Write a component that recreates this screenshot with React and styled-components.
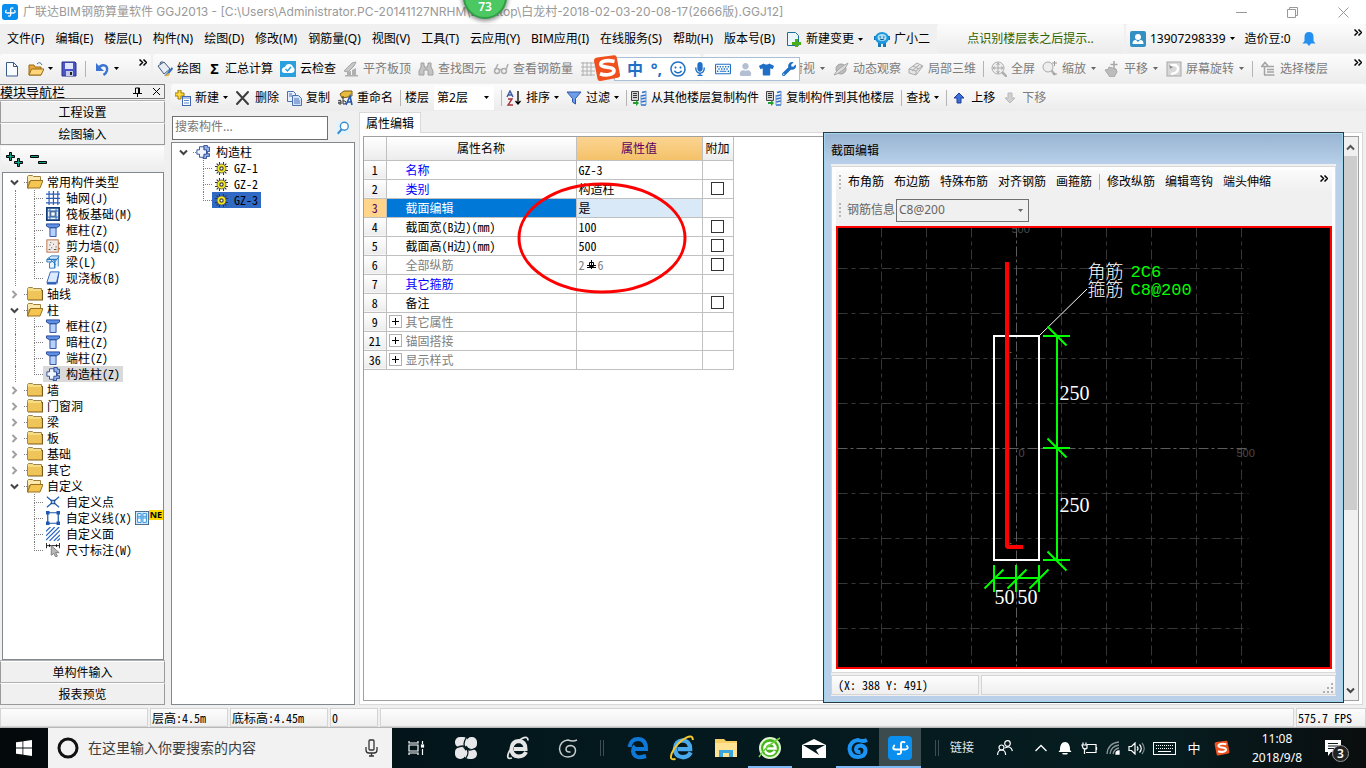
import React from "react";
import styled, { createGlobalStyle, css } from "styled-components";
import {
  FaMicrophone,
  FaTshirt,
  FaWrench,
  FaRegKeyboard,
  FaRegSmile,
  FaUser,
} from "react-icons/fa";

const UI = `"Noto Sans", "Noto Sans CJK SC", sans-serif`;
const SONG = `"Noto Sans Mono CJK SC", "Noto Sans CJK SC", monospace`;

const GlobalStyle = createGlobalStyle`
  * {
    box-sizing: border-box;
  }
  body {
    margin: 0;
    background: #f0f0f0;
    color: #000;
    font: 12px/16px ${UI};
  }
  button, input, select {
    margin: 0;
    padding: 0;
    border: 0;
    background: none;
    color: inherit;
    font: inherit;
  }
  svg {
    display: block;
    flex: none;
  }
`;

const Page = styled.div`
  position: relative;
  display: flex;
  flex-direction: column;
  min-height: 100vh;
  overflow: hidden;
  white-space: nowrap;
`;

/* ---------- title bar ---------- */

const TitleBar = styled.header`
  display: flex;
  align-items: center;
  gap: 5px;
  height: 24px;
  padding-left: 2px;
  background: #fff;
  color: #999;
`;

const WindowTitle = styled.h1`
  flex: 1;
  margin: 0;
  font: 400 12px/16px Inter, "Noto Sans CJK SC", sans-serif;
`;

const WindowButton = styled.button`
  display: grid;
  place-items: center;
  width: 46px;
  height: 22px;
  color: #999;
`;

const Score = styled.div`
  position: absolute;
  top: -25px;
  left: 463px;
  display: flex;
  align-items: flex-end;
  justify-content: center;
  width: 44px;
  height: 44px;
  padding-bottom: 3px;
  border: 2px solid #2f9e47;
  border-radius: 50%;
  background: #4cc863;
  color: #fff;
  font-weight: 600;
  line-height: 14px;
  box-shadow: 0 1px 4px 1px rgba(0, 0, 0, 0.45);
`;

/* ---------- menu and tool bars ---------- */

const BarRow = styled.div`
  display: flex;
  gap: 2px;
  height: 30px;
`;

const Bar = styled.div`
  display: flex;
  align-items: center;
  gap: ${(p) => p.$gap || 7}px;
  height: ${(p) => (p.$low ? 27 : 29)}px;
  padding: 0 ${(p) => p.$right || 4}px 0 ${(p) => p.$left || 4}px;
  border-radius: 3px;
  background: linear-gradient(#fcfcfc, #ececec);
  ${(p) => p.$grow && "flex: 1;"}
  ${(p) => p.$fixed && `width: ${p.$fixed}px; overflow: hidden;`}
`;

const MenuBar = styled.nav`
  display: flex;
  align-items: center;
  gap: 11px;
  width: 935px;
  padding-left: 7px;
`;

const ToolButton = styled.button`
  display: flex;
  flex: none;
  align-items: center;
  gap: 4px;
  color: ${(p) => (p.disabled ? "#7c7c7c" : "#000")};
`;

const Sigma = styled.b`
  width: 13px;
  font-size: 14px;
`;

const Notice = styled.a`
  flex: 1;
  color: #2d6200;
  text-align: center;
  text-decoration: none;
`;

const Separator = styled.span`
  flex: none;
  width: 1px;
  height: 16px;
  margin: 0 ${(p) => (p.$tight ? -3 : 0)}px 0 ${(p) => (p.$both ? -3 : 0)}px;
  background: #b4b4b4;
`;

const MoreButton = styled.button`
  align-self: flex-start;
  margin: 5px 0 0 auto;
`;

const More = () => (
  <MoreButton aria-label="更多">
    <svg width="8" height="7" fill="none" stroke="#000" strokeWidth="1.500">
      <path d="M.5.500l3 3-3 3M4.500.500l3 3-3 3" />
    </svg>
  </MoreButton>
);

const Arrow = styled.svg`
  margin: 0 ${(p) => (p.$gray ? 1 : 0)}px;
`;

const Caret = ({ gray }) => (
  <Arrow $gray={gray} width="5" height="3" aria-hidden="true">
    <path d="M0 0h5L2.500 3z" fill={gray ? "#666" : "#000"} />
  </Arrow>
);

const FloorPicker = styled.label`
  display: flex;
  align-items: center;
  gap: 5px;
`;

const SelectBox = styled.span`
  display: flex;
  align-items: center;
  width: ${(p) => p.$width}px;
  height: ${(p) => (p.$boxed ? 23 : 24)}px;
  padding: 0 4px 0 2px;
  border: 1px solid ${(p) => (p.$boxed ? "#707070" : "#fff")};
  background: ${(p) => (p.$boxed ? "#f0f0f0" : "#fff")};
  select {
    flex: 1;
    min-width: 0;
    appearance: none;
    outline: 0;
  }
`;

/* ---------- floating input method bar ---------- */

const ImeBar = styled.div`
  position: absolute;
  top: 57px;
  left: 614px;
  display: flex;
  align-items: center;
  justify-content: space-between;
  width: 186px;
  height: 24px;
  padding: 0 3px 0 12px;
  border: 1px solid #a9bfd6;
  background: #fff;
  color: #1e6fc5;
  font-size: 16px;
  font-weight: 700;
`;

const ImeLogo = styled.div`
  position: absolute;
  top: -4px;
  left: -22px;
`;

/* ---------- work area ---------- */

const Body = styled.div`
  display: flex;
  flex: 1;
  gap: 6px;
  min-height: 0;
`;

const Dock = styled.aside`
  display: flex;
  flex-direction: column;
  width: 165px;
  padding-bottom: 3px;
`;

const DockHeader = styled.header`
  display: flex;
  align-items: center;
  height: 15px;
  margin-bottom: 2px;
  padding-right: 3px;
  border: 1px solid #7a7a7a;
  border-left: 0;
  font: 13px/13px ${SONG};
  h2 {
    flex: 1;
    margin: 0;
    font-size: 13px;
    font-weight: 400;
  }
  button + button {
    margin-left: 10px;
  }
`;

const SectionButton = styled.button`
  height: 22px;
  border: 1px solid #9a9a9a;
  border-top-color: #fff;
  box-shadow: 0 -1px #b0b0b0;
  font: 12px/18px ${SONG};
`;

const TreeTools = styled.div`
  display: flex;
  align-items: center;
  gap: 7px;
  height: 26px;
  margin: 1px 1px 0;
  padding-left: 5px;
  background: linear-gradient(#fdfdfd, #ececec);
`;

const Tree = styled.ul`
  flex: 1;
  margin: ${(p) => p.$margin || "0"};
  padding: 1px 0;
  border: 1px solid #828790;
  background: #fff;
  font: 12px/16px ${SONG};
  list-style: none;
`;

const Row = styled.li`
  display: flex;
  align-items: center;
  height: 16px;
  padding-left: ${(p) => p.$indent || 0}px;
`;

const Toggle = styled.button`
  display: grid;
  place-items: center;
  width: 20px;
  height: 16px;
`;

const Stub = styled.span`
  width: 3px;
  border-top: 1px dotted #808080;
`;

const GroupName = styled.span`
  margin-left: ${(p) => p.$gap || 4}px;
`;

const Outer = styled.span`
  align-self: stretch;
  width: ${(p) => p.$width}px;
  ${(p) => p.$line && "border-left: 1px dotted #808080;"}
`;

const Branch = styled.span`
  display: flex;
  flex-direction: column;
  align-self: stretch;
  width: 9px;
  &::before {
    content: "";
    height: 8px;
    border: 0 dotted #808080;
    border-width: 0 0 1px 1px;
  }
  &::after {
    content: "";
    flex: 1;
    border-left: ${(p) => (p.$last ? 0 : 1)}px dotted #808080;
  }
`;

const Node = styled.button`
  display: flex;
  flex: none;
  align-items: center;
  gap: 6px;
  height: 16px;
  padding: 0 3px;
  background: ${(p) => p.$fill || "none"};
`;

const NewTag = styled.span`
  align-self: flex-start;
  padding: 0 1px;
  background: #ffd800;
  font: 700 9px/10px ${UI};
`;

const Work = styled.main`
  display: flex;
  flex: 1;
  flex-direction: column;
  min-width: 0;
`;

const Panels = styled.div`
  position: relative;
  display: flex;
  flex: 1;
  gap: 4px;
  margin-top: 1px;
`;

const Components = styled.section`
  display: flex;
  flex-direction: column;
  width: 184px;
  padding: 4px 0 3px;
`;

const SearchRow = styled.div`
  display: flex;
  gap: 3px;
  margin-bottom: 2px;
  padding-left: 1px;
  input {
    flex: 1;
    min-width: 0;
    height: 24px;
    padding: 0 2px 3px;
    border: 1px solid #707070;
    background: #fff;
  }
  input::placeholder {
    color: #777;
  }
  button {
    display: grid;
    place-items: center;
    width: 24px;
  }
`;

const Properties = styled.section`
  display: flex;
  flex: 1;
  flex-direction: column;
  margin-right: 3px;
`;

const Tab = styled.button`
  align-self: flex-start;
  z-index: 1;
  height: 21px;
  margin-bottom: -1px;
  padding: 0 6px;
  border: 1px solid #d9d9d9;
  border-bottom: 0;
  background: #fff;
  font: 12px/16px ${SONG};
`;

const TabPage = styled.div`
  display: flex;
  flex: 1;
  margin-bottom: 3px;
  padding: 3px;
  border: 1px solid #d9d9d9;
  background: #fff;
`;

const Sheet = styled.div`
  display: flex;
  flex: 1;
  align-items: stretch;
  justify-content: space-between;
  border: 1px solid #a0a0a0;
`;

const TableWrap = styled.div`
  position: relative;
`;

const Table = styled.table`
  border-collapse: collapse;
  table-layout: fixed;
  width: 369px;
  font: 12px/16px ${SONG};
  th,
  td {
    height: 19px;
    padding: 0 2px;
    border: 1px solid #c0c0c0;
    font-weight: 400;
    text-align: left;
  }
  th {
    background: linear-gradient(#fff, #ececec);
    text-align: center;
  }
  thead th {
    height: 23px;
    border-top: 0;
  }
  th:first-child {
    border-left: 0;
  }
`;

const ValueHead = styled.th`
  && {
    background: linear-gradient(#fbd491, #f4c169);
    color: #5b0060;
  }
`;

const RowHead = styled.th`
  && {
    ${(p) => p.$on && "background: #ffd58c; color: #5b0060;"}
  }
`;

const NameCell = styled.td`
  && {
    padding-left: ${(p) => (p.$group ? 2 : 19)}px;
    background: ${(p) => (p.$on ? "#0078d7" : "#fff")};
    color: ${(p) => p.$color};
  }
`;

const NameInner = styled.span`
  display: flex;
  align-items: center;
  gap: 4px;
`;

const Expand = styled.button`
  display: grid;
  place-items: center;
  width: 13px;
  height: 13px;
  border: 1px solid #b0b0b0;
  color: #000;
`;

const ValueCell = styled.td`
  && {
    ${(p) => p.$on && "background: #d9e9f8;"}
  }
`;

const BarCount = styled.span`
  display: flex;
  align-items: center;
  gap: 2px;
  color: #808080;
`;

const Box = styled.input`
  appearance: none;
  display: block;
  width: 13px;
  height: 13px;
  margin: 0 auto;
  border: 1px solid #333;
  background: #fff;
`;

const Circled = styled.svg`
  position: absolute;
  top: 44px;
  left: 153px;
`;

const ScrollBar = styled.div`
  display: flex;
  flex-direction: column;
  align-items: center;
  justify-content: space-between;
  width: 16px;
  padding: 6px 0 5px;
  background: #f0f0f0;
  &::after {
    content: "";
    order: 1;
    width: 14px;
    height: 354px;
    margin: 0 0 auto;
    background: #cdcdcd;
  }
  button {
    order: 0;
    margin-bottom: 4px;
  }
  button + button {
    order: 2;
    margin: 0;
  }
`;

/* ---------- section editor window ---------- */

const Dialog = styled.section`
  position: absolute;
  top: 20px;
  right: 22px;
  bottom: 5px;
  z-index: 2;
  display: flex;
  flex-direction: column;
  width: 521px;
  padding: 0 7px 6px;
  border: 1px solid #2a3a42;
  background: linear-gradient(#98b4d2, #b9d1ea 32px, #bacfe8 33px);
  box-shadow: inset 0 0 0 1px #9fd6ee;
`;

const DialogTitle = styled.h2`
  margin: 0;
  padding: 10px 0 5px;
  font-size: 12px;
  font-weight: 400;
  line-height: 16px;
`;

const DialogBody = styled.div`
  display: flex;
  flex: 1;
  flex-direction: column;
  gap: 2px;
  background: #f0f0f0;
`;

const EditorFrame = styled.div`
  display: flex;
  flex: 1;
  flex-direction: column;
  margin-top: 2px;
  padding: 3px 3px 3px 4px;
  border: 1px solid #d9d9d9;
  background: #fff;
`;

const EditorBar = styled.div`
  display: flex;
  align-items: center;
  gap: ${(p) => p.$gap}px;
  height: ${(p) => p.$height}px;
  padding: 0 4px 0 3px;
  background: ${(p) => (p.$plain ? "#f0f0f0" : "linear-gradient(#fbfbfb, #efefef)")};
  color: ${(p) => (p.$plain ? "#666" : "#000")};
  label {
    display: flex;
    align-items: center;
    gap: 1px;
  }
`;

const Grip = styled.span`
  width: 2px;
  height: 14px;
  margin-right: -3px;
  background: repeating-linear-gradient(#b8b8b8 0 2px, transparent 2px 4px);
`;

const Canvas = styled.div`
  display: flex;
  flex: 1;
  border: 2px solid #f00;
  background: #000;
  svg {
    flex: 1;
    width: 0;
    height: auto;
  }
`;

const EditorStatus = styled.div`
  display: flex;
  gap: 2px;
  height: 20px;
  margin-bottom: 1px;
  font: 12px/18px ${SONG};
`;

const StatusCell = styled.div`
  display: flex;
  align-items: center;
  padding: 0 ${(p) => p.$pad || 1}px;
  border: 1px solid #d4d4d4;
  background: linear-gradient(#fdfdfd, #efefef);
  ${(p) => (p.$width ? `width: ${p.$width}px;` : "flex: 1;")}
  ${(p) => p.$end && "align-items: flex-end; justify-content: flex-end;"}
`;

const StatusBar = styled.footer`
  display: flex;
  gap: 2px;
  height: 20px;
  border-bottom: 1px solid #b8b8b8;
  font: 12px/16px ${SONG};
`;

/* ---------- task bar ---------- */

const TaskBar = styled.footer`
  display: flex;
  align-items: stretch;
  height: 40px;
  background: linear-gradient(90deg, #04090b, #03171c 35%, #061d20 85%, #0a0d0e);
  color: #fff;
`;

const TaskButton = styled.button`
  display: grid;
  place-items: center;
  width: ${(p) => p.$width || 44}px;
  ${(p) => p.$on && "background: #3c4b4e;"}
  ${(p) =>
    p.$open &&
    css`
      border-top: 2px solid transparent;
      border-bottom: 2px solid #7db9f5;
    `}
`;

const Cortana = styled.label`
  display: flex;
  align-items: center;
  gap: 8px;
  width: 344px;
  padding: 0 14px 0 8px;
  background: #f2f2f2;
  color: #333;
  input {
    flex: 1;
    font-size: 14px;
  }
  input::placeholder {
    color: #3c3c3c;
  }
`;

const Divider = styled.span`
  align-self: center;
  width: 4px;
  height: 16px;
  margin: 0 ${(p) => p.$right}px 0 ${(p) => p.$left}px;
  border: 1px solid #3f4c50;
  border-width: 0 1px;
`;

const Links = styled.button`
  color: #e4e6e7;
`;

const Tray = styled.div`
  display: flex;
  flex: 1;
  align-items: center;
  justify-content: flex-end;
`;

const TrayIcon = styled.button`
  display: grid;
  place-items: center;
  width: ${(p) => p.$width}px;
  height: 40px;
  font-size: 13px;
`;

const Clock = styled.time`
  width: 80px;
  font-size: 12px;
  line-height: 19px;
  text-align: center;
`;

const Notices = styled.button`
  position: relative;
  width: 42px;
  height: 24px;
  margin-right: 7px;
  padding-left: 8px;
`;

const Count = styled.span`
  position: absolute;
  top: 9px;
  left: 15px;
  width: 17px;
  height: 17px;
  border: 1px solid #999;
  border-radius: 50%;
  background: #222;
  font: 600 12px/15px ${UI};
  text-align: center;
`;

/* ---------- icons ---------- */

const AppLogo = ({ size = 16 }) => (
  <svg width={size} height={size} viewBox="0 0 24 24">
    <rect width="24" height="24" rx="4" fill="#0a8fef" />
    <path
      d="M16.500 6.200q-3.500-1.200-3.500 2V16q0 2.600-3.200 2M6.200 9.500Q3.500 13.500 8 13.500h9q4.200-.5 2-3.500"
      fill="none"
      stroke="#fff"
      strokeWidth="1.900"
      strokeLinecap="round"
    />
  </svg>
);

const SogouLogo = ({ size = 28 }) => (
  <svg width={size} height={size} viewBox="0 0 28 28">
    <path d="M4 3.500 21 1.200q2.300-.2 2.700 2L27 20.500q.4 2.700-2.200 3.200L7.500 27Q5 27.400 4.500 25L1 7Q.7 4 4 3.500z" fill="#f0501e" />
    <path
      d="M21.500 7.500C14 5.500 7.500 7 7.800 10.500c.4 4.200 13.200 1.300 13.200 6.200 0 4-8 5.200-14 3"
      fill="none"
      stroke="#fff"
      strokeWidth="3.600"
    />
  </svg>
);

const icons = {
  file: (
    <path d="M2.500 1.500h7l4 4v9.500h-11z M9.500 1.500v4h4" fill="#f8fbff" stroke="#3a5c8c" />
  ),
  open: (
    <>
      <path d="M1 4h5l1 2h6v8H1z" fill="#e8a93a" stroke="#9a6a16" />
      <path d="M3.500 8H16l-3 6H1z" fill="#ffd77a" stroke="#9a6a16" />
      <path d="M9 3q3-3 5 1" fill="none" stroke="#4a6c9a" />
    </>
  ),
  save: (
    <>
      <path d="M1 1h13l1 1v13H1z" fill="#4b55c8" stroke="#2b3488" />
      <path d="M4 2h8v6H4z" fill="#dfe6ff" />
      <path d="M5 10h7v5H5z" fill="#c3cbe8" />
      <path d="M9 11h2v3H9z" fill="#222" />
    </>
  ),
  undo: (
    <>
      <path d="M4 7.500C8 2 14 4 13 9.500q-.6 2.500-3.500 4.500" fill="none" stroke="#3c74d4" strokeWidth="2.400" />
      <path d="M2 2v8h8z" fill="#3c74d4" />
    </>
  ),
  bucket: (
    <>
      <path d="M1 5l6-4 6 7-6 5z" fill="#e6edf5" stroke="#3f5878" />
      <path d="M3 3q0-3 3-2" fill="none" stroke="#3f5878" />
      <path d="M15 6l-5 6-3 3 4-1 5-6z" fill="#2f6bc0" />
      <path d="M8 15q4 1 5-2l-2-1z" fill="#e8b53a" />
    </>
  ),
  cloud: (
    <>
      <rect width="16" height="16" fill="#2aa0dc" />
      <path d="M4 12q-3-1-2-4 1-2 3-2 1-3 4-3 3 0 4 3 2 1 1.500 3.500T11 12z" fill="#fff" />
      <path d="M5.500 8l2 2 3.500-4" fill="none" stroke="#2aa0dc" strokeWidth="1.500" />
    </>
  ),
  slab: (
    <>
      <path d="M1 10l8-8 4-1-2 4-6 6z" fill="#c8c8c8" stroke="#a4a4a4" />
      <path d="M4 15v-4l4-1v5zM9 15V9l4-2v8zM2 14h13v1.500H2z" fill="#b0b0b0" />
    </>
  ),
  find: (
    <path
      d="M3 2h3v3h1v2h2V5h1V2h3v4l2 4v4h-5V9H6v5H1v-4l2-4z"
      fill="#c4c4c4"
      stroke="#a0a0a0"
    />
  ),
  glasses: (
    <g fill="none" stroke="#adadad" strokeWidth="1.500">
      <circle cx="4" cy="10" r="2.500" />
      <circle cx="11" cy="10" r="2.500" />
      <path d="M6 9q1.500-1 3 0M2 9l3-6M13 9l2-6" />
    </g>
  ),
  grid: (
    <path d="M1 2h14M1 6h14M1 10h14M1 14h14M3 1v14M7 1v14M11 1v14" stroke="#b0b0b0" fill="none" />
  ),
  planet: (
    <>
      <circle cx="8" cy="8" r="5" fill="#bdbdbd" stroke="#a0a0a0" />
      <path d="M1 14Q4 8 15 2q-2 6-11 11z" fill="#dedede" stroke="#a8a8a8" />
    </>
  ),
  cube: (
    <path
      d="M1 8l8-6 6 3-7 9-7-2zM5 5l6 3M4 10l7-6M1 8l7 2v4M8 10l6-5"
      fill="#e6e6e6"
      stroke="#aaa"
    />
  ),
  full: (
    <>
      <circle cx="7" cy="7" r="6" fill="#eee" stroke="#aaa" />
      <path d="M7 2v10M2 7h10M5.500 4L7 2l1.500 2M5.500 10L7 12l1.500-2M4 5.500L2 7l2 1.500M10 5.500L12 7l-2 1.500" fill="none" stroke="#aaa" />
      <path d="M11 11l5 5" stroke="#b0b0b0" strokeWidth="2.500" />
    </>
  ),
  zoom: (
    <>
      <circle cx="6" cy="6" r="5" fill="#eee" stroke="#aaa" />
      <path d="M9.500 9.500L13 14" stroke="#b0b0b0" strokeWidth="2.500" />
      <path d="M10 2h5M12.500 0v5M11 13h4" stroke="#999" />
    </>
  ),
  hand: (
    <>
      <path d="M1 9q2-1 3 0l1-3 7 2 1 3-3 5H6z" fill="#bcbcbc" stroke="#a6a6a6" />
      <path d="M10 0v7M6.500 3.500h7" stroke="#a6a6a6" strokeWidth="1.500" />
    </>
  ),
  turn: (
    <>
      <rect x="1" y="1" width="14" height="14" fill="#d8d8d8" stroke="#a8a8a8" />
      <path d="M5 13q7-1 7-5T8 4 4 6.500" fill="none" stroke="#fff" strokeWidth="2.400" />
      <path d="M3 4l1 4 3-2z" fill="#8c8c8c" />
    </>
  ),
  floors: (
    <path d="M1 5.500h13M2 5l3-3.500L8 5M4.500 6v8M4 14h10.500M7 8.500h7M7 11h7" stroke="#a4a4a4" strokeWidth="1.500" />
  ),
  add: (
    <>
      <path d="M3 0h3v3h3v3H6v3H3V6H0V3h3z" fill="#ffd83a" stroke="#9c7a10" />
      <rect x="7.500" y="6.500" width="8" height="9" fill="#fff" stroke="#3f68b0" />
      <path d="M8 8h7M9 10.500h5M9 13h5" stroke="#5b86cf" />
    </>
  ),
  remove: (
    <path d="M2 2l11 12M13 2L2 14" stroke="#3c3c3c" strokeWidth="2" strokeLinecap="round" />
  ),
  copy: (
    <>
      <path d="M1.500 1.500h6l2 2v8h-8z" fill="#e8f0ff" stroke="#4a70b0" />
      <path d="M6.500 5.500h6l3 3v7h-9z" fill="#d3e2ff" stroke="#4a70b0" />
      <path d="M8 9h5M8 11h6M8 13h6M3 4h3M3 6h3" stroke="#4a70b0" />
    </>
  ),
  rename: (
    <>
      <path d="M3 4l4-3h8v5l-4 1-6 1z" fill="#e8bb3c" stroke="#7a5a10" />
      <path d="M1 11q3-2 3 0v3H2q-2-2 2-2M6 6v8h2q2-2 0-3H6" fill="none" stroke="#333" />
      <path d="M9 15l4-9 2 9M10 12h5" fill="none" stroke="#2458b0" strokeWidth="1.600" />
    </>
  ),
  sort: (
    <>
      <path d="M1 7l3-6 3 6M2 5h4" fill="none" stroke="#3c58a0" strokeWidth="1.400" />
      <path d="M2 9h4l-4 6h5" fill="none" stroke="#a8323c" strokeWidth="1.400" />
      <path d="M12 1v13M9.500 11l2.500 3 2.500-3" fill="none" stroke="#000" strokeWidth="1.300" />
    </>
  ),
  funnel: <path d="M1 2h14L9.500 8.500V14l-3-2V8.500z" fill="#6f9fe8" stroke="#2b56a8" />,
  copyFloor: (
    <>
      <path d="M.5 1.500h7v9h-7z" fill="#d4d4d4" stroke="#444" />
      <path d="M2 3.500h4M2 5.500h4M2 7.500h4" stroke="#333" />
      <path d="M11 2.500l4-1M10 6l5-1M10 9l5-1M10 12l5-1M10 15h5" stroke="#2f6fc8" strokeWidth="1.600" />
      <path d="M10 5v10M15 1v14" stroke="#6c9cdc" />
      <path d="M2 12h3v-2l3 3-3 3v-2H2z" fill="#20a030" />
    </>
  ),
  up: <path d="M8 3l5 5h-3v5H6V8H3z" fill="#3c6fdc" stroke="#1c3f9c" />,
  down: <path d="M8 13L3 8h3V3h4v5h3z" fill="#d0d0d0" stroke="#b8b8b8" />,
  change: (
    <>
      <path d="M1.500 1.500h8l3 3v10h-11z" fill="#eaf6fc" stroke="#1d6f95" />
      <path d="M9 8h3v3h3v3h-3v3H9v-3H6v-3h3z" fill="#4cae16" />
    </>
  ),
  mascot: (
    <>
      <path d="M0 5h2v4H0zM14 5h2v4h-2zM4 11h3v5H4zM9 11h3v5H9z" fill="#1578b8" />
      <ellipse cx="8" cy="7" rx="7" ry="6" fill="#1c98dc" />
      <ellipse cx="8" cy="6.500" rx="4.500" ry="3.500" fill="#a8defa" />
      <path d="M5.500 6h1.500M9 6h1.500M6 8q2 1.500 4 0" fill="none" stroke="#075080" />
    </>
  ),
  account: (
    <>
      <rect width="16" height="16" rx="2" fill="#3290c4" />
      <circle cx="8" cy="6" r="3" fill="#fff" />
      <path d="M2.500 13q0-4 3-4h5q3 0 3 4z" fill="#fff" />
      <path d="M6 9l2 2 2-2" fill="#3290c4" />
    </>
  ),
  bell: (
    <path d="M8 1q4.500 0 4.500 5v4l2 2.500H10l-2 2.500-2-2.500H1.500L3.500 10V6Q3.500 1 8 1z" fill="#2490f0" />
  ),
  magnifier: (
    <>
      <rect width="16" height="16" fill="#e6f2fa" />
      <circle cx="9.500" cy="6" r="4.500" fill="#fff" stroke="#3a8fd0" strokeWidth="1.600" />
      <path d="M6.500 9.500l-4.500 5" stroke="#3a8fd0" strokeWidth="2.400" />
    </>
  ),
  folder: (
    <>
      <path d="M.5 3.500v-1l1-1h4l1 1h8v11H.5z" fill="#f7dc86" stroke="#9c8650" />
      <path d="M1 5h14v9H1z" fill="#efc559" />
      <path d="M1 14h14.500V4" fill="none" stroke="#7d5a18" strokeWidth="1.200" />
    </>
  ),
  folderOpen: (
    <>
      <path d="M.5 2.500l1-1h4l1 1h7v5H2v6.500H.5z" fill="#fbe9ac" stroke="#a08038" />
      <path d="M3.500 6.500H16L13 14H.5z" fill="#f4c550" stroke="#9a7020" />
    </>
  ),
  axis: (
    <path d="M0 3.500h16M0 8.500h16M0 13.500h16M3.500 0v16M8.500 0v16M13.500 0v16" stroke="#2c5cb8" strokeWidth="1.400" />
  ),
  raft: (
    <>
      <rect x="1" y="1" width="14" height="14" fill="#eaf2ff" stroke="#123c78" strokeWidth="2" />
      <path d="M4.500 2v12M11.500 2v12M2 4.500h12M2 11.500h12" stroke="#2060b0" />
      <rect x="5.500" y="5.500" width="5" height="5" fill="#fff" stroke="#123c78" />
    </>
  ),
  column: (
    <>
      <path d="M.5 1h15v2.500l-3.500 2H4l-3.500-2z" fill="#5d8fe6" stroke="#1c3f90" />
      <path d="M4.500 5.500h7v10h-7z" fill="#b6d0ff" stroke="#1c3f90" />
    </>
  ),
  wall: (
    <>
      <rect x="1" y="1" width="13" height="14" fill="#f2ece8" stroke="#b56434" />
      <path d="M3 12h2M6 10h1M9 12h3M4 7h1M8 6h1M11 9h1M5 4h1" stroke="#555" strokeWidth="1.400" />
      <path d="M14 5h2M14 11h2" stroke="#c87030" strokeWidth="2" />
    </>
  ),
  beam: (
    <>
      <path d="M1 5l5-4h9l-2 4zM1 5h12v3H1z" fill="#cfe6fb" stroke="#2472b8" />
      <path d="M4 15V9l6-3v9zM10 15V8l4-5v10" fill="#e8f4ff" stroke="#2472b8" />
      <path d="M3 3l8 8" stroke="#2472b8" />
    </>
  ),
  plate: (
    <>
      <path d="M5 1h10l-3 12H1z" fill="#dceaff" stroke="#1c58b0" />
      <path d="M1 13h11v2.500H1zM12 13l3-12v3l-2 11" fill="#2860b8" />
    </>
  ),
  structure: (
    <>
      <path d="M9 .5h4v2h2.500v5H13V10h2.500v3H12v2.500H8z" fill="#8fb0ea" stroke="#24408c" />
      <path d="M4 2h5v3.500h3v5H9V14H4v-3.500H1v-5h3z" fill="#f2f7ff" stroke="#24408c" />
    </>
  ),
  cross: (
    <>
      <path d="M1 2l14 12M15 2L1 14" stroke="#2060b0" strokeWidth="1.400" />
      <rect x="6" y="6" width="4" height="4" fill="#9cc4ff" stroke="#123c78" />
    </>
  ),
  polyline: (
    <>
      <path d="M2 2h12v12H2z" fill="none" stroke="#1c58b0" strokeWidth="1.400" />
      <path d="M0 0h4v4H0zM12 0h4v4h-4zM0 12h4v4H0zM12 12h4v4h-4z" fill="#1c58b0" />
    </>
  ),
  hatch: (
    <path d="M0 5l5-5M0 10L10 0M0 15L15 0M4 16L16 4M9 16l7-7M13 16l3-3" stroke="#2a68c4" strokeWidth="1.400" />
  ),
  measure: (
    <>
      <path d="M.5 0v6M15.500 0v6M1 3h14M4 1.500v3M12 1.500v3" stroke="#000" />
      <path d="M6 3v11l3-2 2 4 2-1-2-4h4z" fill="#b8b8b8" stroke="#777" />
    </>
  ),
  book: (
    <>
      <rect x=".5" y=".5" width="15" height="15" fill="#cfe9ff" stroke="#3a5c7c" />
      <path d="M3 3h4v10H3zM9 3h4v10H9zM3 6h4M9 6h4M3 8h4M9 8h4" fill="#fff" stroke="#1f86d8" />
    </>
  ),
  part: (
    <>
      <path d="M5.500 0v16M10.500 0v16M0 5.500h16M0 10.500h16M2 2l12 12M14 2L2 14" stroke="#333" strokeWidth="1.300" />
      <circle cx="8" cy="8" r="5.500" fill="#f4e81c" stroke="#555" />
      <circle cx="8" cy="8" r="2" fill="#fff" stroke="#444" strokeWidth="1.500" />
    </>
  ),
};

const Icon = ({ name, size = 16 }) => (
  <svg width={size} height={size} viewBox="0 0 16 16" fill="none" aria-hidden="true">
    {icons[name]}
  </svg>
);

const Chevron = ({ open, up }) => (
  <svg width="9" height="9" viewBox="0 0 9 9" fill="none" aria-hidden="true">
    {open && <path d="M1 2.500l3.500 3.500L8 2.500" stroke="#444" strokeWidth="2" />}
    {up && <path d="M1 6.500L4.500 3 8 6.500" stroke="#555" strokeWidth="2" />}
    {!open && !up && <path d="M2.500 1L6 4.500 2.500 8" stroke="#a0a0a0" strokeWidth="2" />}
  </svg>
);

/* ---------- data ---------- */

const menus = [
  "文件(F)", "编辑(E)", "楼层(L)", "构件(N)", "绘图(D)", "修改(M)", "钢筋量(Q)",
  "视图(V)", "工具(T)", "云应用(Y)", "BIM应用(I)", "在线服务(S)", "帮助(H)", "版本号(B)",
];

const groups = [
  {
    name: "常用构件类型",
    line: true,
    items: [
      ["axis", "轴网(J)"],
      ["raft", "筏板基础(M)"],
      ["column", "框柱(Z)"],
      ["wall", "剪力墙(Q)"],
      ["beam", "梁(L)"],
      ["plate", "现浇板(B)"],
    ],
  },
  { name: "轴线" },
  {
    name: "柱",
    line: true,
    items: [
      ["column", "框柱(Z)"],
      ["column", "暗柱(Z)"],
      ["column", "端柱(Z)"],
      ["structure", "构造柱(Z)"],
    ],
  },
  { name: "墙" },
  { name: "门窗洞" },
  { name: "梁" },
  { name: "板" },
  { name: "基础" },
  { name: "其它" },
  {
    name: "自定义",
    items: [
      ["cross", "自定义点"],
      ["polyline", "自定义线(X)"],
      ["hatch", "自定义面"],
      ["measure", "尺寸标注(W)"],
    ],
  },
];

// 三级钢符号
const rebar = (
  <BarCount>
    2
    <svg width="9" height="10" fill="none" stroke="#000">
      <path d="M2.500 2.500h4v4h-4zM4.500 0v9M0 7.500h9M0 5.500h9" />
    </svg>
    6
  </BarCount>
);

const properties = [
  { no: 1, name: "名称", color: "#00f", value: "GZ-3" },
  { no: 2, name: "类别", color: "#00f", value: "构造柱", box: true },
  { no: 3, name: "截面编辑", color: "#fff", value: "是", on: true },
  { no: 4, name: "截面宽(B边)(mm)", value: "100", box: true },
  { no: 5, name: "截面高(H边)(mm)", value: "500", box: true },
  { no: 6, name: "全部纵筋", color: "#808080", value: rebar, box: true },
  { no: 7, name: "其它箍筋", color: "#00f", value: "" },
  { no: 8, name: "备注", value: "", box: true },
  { no: 9, name: "其它属性", color: "#808080", value: "", group: true },
  { no: 21, name: "锚固搭接", color: "#808080", value: "", group: true },
  { no: 36, name: "显示样式", color: "#808080", value: "", group: true },
];

/* ---------- parts ---------- */

const Tool = ({ icon, label, children, caret, disabled }) => (
  <ToolButton disabled={disabled} aria-label={label}>
    {icon && <Icon name={icon} />}
    {children}
    {caret && <Caret gray={disabled} />}
  </ToolButton>
);

const ModuleDock = () => (
  <Dock>
    <DockHeader>
      <h2>模块导航栏</h2>
      <button aria-label="固定">
        <svg width="9" height="10" fill="none" stroke="#000">
          <path d="M2.500 6V1h4v5M0 6.500h9M4.500 7v3M5.500 1v5" />
        </svg>
      </button>
      <button aria-label="关闭">
        <svg width="9" height="9" fill="none" stroke="#000">
          <path d="M1 1l7 7M8 1L1 8" />
        </svg>
      </button>
    </DockHeader>
    <SectionButton>工程设置</SectionButton>
    <SectionButton>绘图输入</SectionButton>
    <TreeTools>
      <button aria-label="全部展开">
        <svg width="17" height="15" fill="#0fa08c" stroke="#000">
          <path d="M3.500.5h2v3h3v2h-3v3h-2v-3h-3v-2h3z" />
          <path d="M11.500 6.500h2v3h3v2h-3v3h-2v-3h-3v-2h3z" />
        </svg>
      </button>
      <button aria-label="全部折叠">
        <svg width="17" height="11" fill="#0fa08c" stroke="#000">
          <path d="M.5 1.500h8v2h-8zM8.500 7.500h8v2h-8z" />
        </svg>
      </button>
    </TreeTools>
    <Tree $margin="0 1px 1px 2px">
      {groups.map((g) => (
        <React.Fragment key={g.name}>
          <Row $indent={1}>
            <Toggle aria-label={g.name}>
              <Chevron open={Boolean(g.items)} />
            </Toggle>
            <Stub />
            <Icon name={g.items ? "folderOpen" : "folder"} />
            <GroupName>{g.name}</GroupName>
          </Row>
          {(g.items || []).map(([icon, label], i) => (
            <Row key={label} $indent={12}>
              <Outer $width={19} $line={g.line} />
              <Branch $last={i === g.items.length - 1} />
              <Node $fill={label === "构造柱(Z)" && "#d9d9d9"}>
                <Icon name={icon} size={14} />
                {label}
              </Node>
              {icon === "polyline" && (
                <>
                  <Icon name="book" size={14} />
                  <NewTag>NE</NewTag>
                </>
              )}
            </Row>
          ))}
        </React.Fragment>
      ))}
    </Tree>
    <SectionButton>单构件输入</SectionButton>
    <SectionButton>报表预览</SectionButton>
  </Dock>
);

const ComponentList = () => (
  <Components>
    <SearchRow>
      <input type="text" aria-label="搜索构件" placeholder="搜索构件..." />
      <button aria-label="搜索">
        <Icon name="magnifier" size={14} />
      </button>
    </SearchRow>
    <Tree>
      <Row $indent={1}>
        <Toggle aria-label="构造柱">
          <Chevron open />
        </Toggle>
        <Stub />
        <Icon name="structure" size={14} />
        <GroupName $gap={6}>构造柱</GroupName>
      </Row>
      {["GZ-1", "GZ-2", "GZ-3"].map((name, i) => (
        <Row key={name} $indent={12}>
          <Outer $width={19} />
          <Branch $last={i === 2} />
          <Node $fill={i === 2 && "#316ac5"}>
            <Icon name="part" size={13} />
            {name}
          </Node>
        </Row>
      ))}
    </Tree>
  </Components>
);

const PropertyTable = () => (
  <TableWrap>
    <Table>
      <colgroup>
        <col width="22" />
        <col width="190" />
        <col width="126" />
        <col width="31" />
      </colgroup>
      <thead>
        <tr>
          <th />
          <th>属性名称</th>
          <ValueHead>属性值</ValueHead>
          <th>附加</th>
        </tr>
      </thead>
      <tbody>
        {properties.map((p) => (
          <tr key={p.no}>
            <RowHead $on={p.on}>{p.no}</RowHead>
            <NameCell $group={p.group} $on={p.on} $color={p.color || "#000"}>
              <NameInner>
                {p.group && (
                  <Expand aria-label={`展开${p.name}`}>
                    <svg width="7" height="7" stroke="#000">
                      <path d="M0 3.500h7M3.500 0v7" />
                    </svg>
                  </Expand>
                )}
                {p.name}
              </NameInner>
            </NameCell>
            <ValueCell $on={p.on}>{p.value}</ValueCell>
            <td>{p.box && <Box type="checkbox" aria-label={`附加${p.name}`} />}</td>
          </tr>
        ))}
      </tbody>
    </Table>
    <Circled width="170" height="114" fill="none">
      <ellipse cx="85" cy="57" rx="83" ry="54" stroke="#f00" strokeWidth="3" />
    </Circled>
  </TableWrap>
);

const minor = [-135, -90, -45, 45, 90, 135, 180, 225];
const minorRows = [-180, -135, -90, -45, 45, 90, 135, 180];

const SectionDrawing = () => (
  <svg role="img" aria-label="截面图">
    <g transform="translate(178.500 220.500)" fill="none">
      <g stroke="#363636" strokeDasharray="10 4 4 4">
        {minor.map((x) => (
          <path key={x} d={`M${x}-221V218`} />
        ))}
        {minorRows.map((y) => (
          <path key={y} d={`M-179 ${y}H232`} />
        ))}
      </g>
      <path d="M0-221V218M-179 0H232" stroke="#5c5c5c" strokeDasharray="10 3 3 3" />
      <g fill="#4a4a4a" fontFamily="Liberation Sans, sans-serif" fontSize="11">
        <text x="-5" y="-216">500</text>
        <text x="2" y="8">0</text>
        <text x="220" y="8">500</text>
      </g>
      <path d="M-22.500-112.500h45v224h-45z" stroke="#fff" strokeWidth="2" />
      <path d="M23-113L70.500-159.500" stroke="#fff" />
      <path d="M-9.500-186.500V98.500H6.500" stroke="#f00" strokeWidth="4" strokeLinejoin="bevel" />
      <path d="M-7-96h2M-7 95h2" stroke="#776a20" />
      <g stroke="#0f0" strokeWidth="2">
        <path d="M40.500-112.500v224M26.500-112.500h27M26.500-.500h27M26.500 111.500h27" />
        <path d="M31-122l19 19M31-10l19 19M31 103l19 19" />
        <path d="M-22.500 129.500h45M-22.500 116.500v27M-.500 116.500v27M22.500 116.500v27" />
        <path d="M-32 140l19-19M-9 140l19-19M13 140l19-19" />
      </g>
      <g fill="#fff" fontFamily="Liberation Serif, serif" fontSize="20">
        <text x="43" y="-49">250</text>
        <text x="43" y="63">250</text>
        <text x="-22" y="155">50</text>
        <text x="1" y="155">50</text>
      </g>
      <g fill="#fff" fontFamily="Noto Sans CJK SC, sans-serif" fontSize="18" fontWeight="300">
        <text x="71" y="-171">角筋</text>
        <text x="71" y="-153">箍筋</text>
      </g>
      <g fill="#0f0" fontFamily="Liberation Mono, monospace" fontSize="17">
        <text x="114" y="-172">2C6</text>
        <text x="114" y="-154">C8@200</text>
      </g>
    </g>
  </svg>
);

const SectionEditor = () => (
  <Dialog aria-label="截面编辑">
    <DialogTitle>截面编辑</DialogTitle>
    <DialogBody>
      <EditorFrame>
        <EditorBar $gap={10} $height={24}>
          <Grip />
          {["布角筋", "布边筋", "特殊布筋", "对齐钢筋", "画箍筋"].map((t) => (
            <Tool key={t}>{t}</Tool>
          ))}
          <Separator $tight $both />
          {["修改纵筋", "编辑弯钩", "端头伸缩"].map((t) => (
            <Tool key={t}>{t}</Tool>
          ))}
          <More />
        </EditorBar>
        <EditorBar $gap={9} $height={32} $plain>
          <Grip />
          <label>
            钢筋信息
            <SelectBox $width={133} $boxed>
              <select>
                <option>C8@200</option>
              </select>
              <Caret gray />
            </SelectBox>
          </label>
        </EditorBar>
        <Canvas>
          <SectionDrawing />
        </Canvas>
      </EditorFrame>
      <EditorStatus>
        <StatusCell $width={148} $pad={6}>(X: 388 Y: 491)</StatusCell>
        <StatusCell $end>
          <svg width="11" height="11" fill="#b0b0b0">
            <path d="M8 0h2v2H8zM4 4h2v2H4zM8 4h2v2H8zM0 8h2v2H0zM4 8h2v2H4zM8 8h2v2H8z" />
          </svg>
        </StatusCell>
      </EditorStatus>
    </DialogBody>
  </Dialog>
);

const Ime = () => (
  <ImeBar>
    <ImeLogo>
      <SogouLogo />
    </ImeLogo>
    <span>中</span>
    <span>°,</span>
    <FaRegSmile size={16} />
    <FaMicrophone size={14} />
    <FaRegKeyboard size={16} />
    <FaUser size={13} color="#b4bfd4" />
    <FaTshirt size={15} />
    <FaWrench size={14} />
  </ImeBar>
);

const Swirl = ({ color, width = 2 }) => (
  <svg width="24" height="24" viewBox="0 0 24 24" fill="none" stroke={color} strokeWidth={width}>
    <path d="M21 4Q17 6 12 4 4 5 3.500 13q1 8 8.500 8 7.500-.5 7.500-6.500 0-4-4.500-5-5 0-5 4 .5 3 4.500 2.500" />
  </svg>
);

const BrowserE = ({ color, ring, size = 24 }) => (
  <svg width={size} height={size} viewBox="0 0 24 24" fill="none">
    <path d="M20 16Q18 20.500 12.500 20.500 5.500 20 5.500 12.500 6 5.500 12.500 5q7 .5 7 8H8" stroke={color} strokeWidth="4" />
    <path d="M6 22Q0 24 2.500 17 7 7 16 2.500q6-3 6 2" stroke={ring} strokeWidth="1.800" />
  </svg>
);

const WindowsTaskBar = () => (
  <TaskBar>
    <TaskButton $width={48} aria-label="开始">
      <svg width="16" height="16" fill="#fff">
        <path d="M0 2.300L6.500 1.400v6.200H0zM7.300 1.300L16 0v7.600H7.300zM0 8.400h6.500v6.200L0 13.700zM7.300 8.400H16V16l-8.700-1.300z" />
      </svg>
    </TaskButton>
    <Cortana>
      <svg width="24" height="24">
        <circle cx="12" cy="12" r="9" fill="none" stroke="#111" strokeWidth="3" />
      </svg>
      <input type="search" aria-label="搜索" placeholder="在这里输入你要搜索的内容" />
      <svg width="13" height="18" fill="none" stroke="#333" strokeWidth="1.300">
        <rect x="4" y="1" width="5" height="10" rx="1" />
        <path d="M1 8v3q0 3 3 3h5q3 0 3-3V8M6.500 14v3M4 17h5" />
      </svg>
    </Cortana>
    <TaskButton $width={48} aria-label="任务视图">
      <svg width="17" height="16" fill="none" stroke="#fff" strokeWidth="1.200">
        <path d="M1 1v2h9V1M1 15v-2h9v2M1 5h9v6H1zM14.500 1v3M14.500 9v6" />
        <rect x="13.500" y="5" width="2" height="2" fill="#fff" />
      </svg>
    </TaskButton>
    <TaskButton $width={52} aria-label="应用">
      <svg width="22" height="22" viewBox="0 0 22 22" fill="#e8e8ea">
        <rect x="0" y="0" width="13" height="10.500" rx="5" />
        <rect x="11.500" y="0" width="10.500" height="12" rx="5" />
        <rect x="9" y="12" width="13" height="10" rx="5" />
        <rect x="0" y="10" width="10.500" height="12" rx="5" />
        <path d="M1 11q8-4 10 0 3 4 10 0M11 1q-4 7 0 10 4 4 0 10" fill="none" stroke="#03171c" strokeWidth="1.300" />
      </svg>
    </TaskButton>
    <TaskButton $width={52} aria-label="浏览器">
      <BrowserE color="#e6e6e6" ring="#e6e6e6" />
    </TaskButton>
    <TaskButton $width={48} aria-label="广联达">
      <Swirl color="#c8ccce" width={1.5} />
    </TaskButton>
    <Divider $left={8} $right={12} />
    <TaskButton aria-label="Edge">
      <svg width="22" height="24" viewBox="0 0 22 24" fill="none" stroke="#0f78d7">
        <path d="M19 20Q7 24 6 15q0-3 2-5M2.500 11Q4 3 11 3q8 0 8 10H7" strokeWidth="4" />
      </svg>
    </TaskButton>
    <TaskButton aria-label="Internet Explorer">
      <BrowserE color="#4aa8ec" ring="#f6c830" size={26} />
    </TaskButton>
    <TaskButton aria-label="文件资源管理器">
      <svg width="22" height="18">
        <path d="M0 0h9l2 2h11v16H0z" fill="#f5cf64" />
        <path d="M0 4h22v14H0z" fill="#ffe394" />
        <path d="M4 11h14v7h-4v-4H8v4H4z" fill="#3ba6dc" />
      </svg>
    </TaskButton>
    <TaskButton $open aria-label="360浏览器">
      <svg width="24" height="24" viewBox="0 0 24 24" fill="none">
        <circle cx="12" cy="12" r="10" fill="#46b51c" stroke="#dff5cf" strokeWidth="2" />
        <path d="M17 15q-2 3-5 3-5 0-5.500-5.500Q7 7 12 7q5 0 5.500 5.500H9" stroke="#fff" strokeWidth="2.600" />
        <path d="M1 21Q8 10 22 2" stroke="#6ed03c" strokeWidth="1.500" />
      </svg>
    </TaskButton>
    <TaskButton aria-label="邮件">
      <svg width="24" height="19" fill="#fff">
        <path d="M0 6l12-6 12 6v13H0z" />
        <path d="M1 6h22l-9 5 3 5z" fill="#03171c" />
      </svg>
    </TaskButton>
    <TaskButton $open $width={43} aria-label="广联达">
      <Swirl color="#1c94f4" width={4} />
    </TaskButton>
    <TaskButton $open $on $width={42} aria-label="广联达BIM钢筋算量软件">
      <AppLogo size={24} />
    </TaskButton>
    <Divider $left={14} $right={11} />
    <Links>链接</Links>
    <Tray>
      <TrayIcon $width={48} aria-label="人脉">
        <svg width="16" height="16" fill="none" stroke="#fff" strokeWidth="1.200">
          <circle cx="10.500" cy="3.500" r="2.800" />
          <circle cx="4.500" cy="7.500" r="2.500" />
          <path d="M.6 15q0-5 4-5t4 5M8 8q6-3 7.400 3" />
        </svg>
      </TrayIcon>
      <TrayIcon $width={24} aria-label="显示隐藏的图标">
        <svg width="12" height="8" fill="none" stroke="#fff" strokeWidth="1.300">
          <path d="M.5 7L6 1.500 11.500 7" />
        </svg>
      </TrayIcon>
      <TrayIcon $width={24} aria-label="通知">
        <svg width="14" height="14" fill="#fff">
          <path d="M2 9Q2 1 7 1t5 8l1.500 2H.5zM4 12h6l-1 1.500H5z" />
        </svg>
      </TrayIcon>
      <TrayIcon $width={25} aria-label="电源">
        <svg width="17" height="13" fill="none" stroke="#fff" strokeWidth="1.200">
          <path d="M6 2.500h9v8H5M15.500 5v3M1 3h5v3q-2 2-4 0zM2 .500V3M5 .500V3M3.500 7v5" />
        </svg>
      </TrayIcon>
      <TrayIcon $width={22} aria-label="网络">
        <svg width="14" height="14" fill="none" stroke="#8b9699" strokeWidth="1.300">
          <path d="M1 13Q2 2 13 1M4 13q1-8 9-9M7 13q1-5 6-6" />
          <path d="M10 13q0-3 3-3v3z" fill="#fff" stroke="#fff" />
        </svg>
      </TrayIcon>
      <TrayIcon $width={24} aria-label="音量">
        <svg width="17" height="13" fill="none" stroke="#fff" strokeWidth="1.200">
          <path d="M1 4.500h2.500L7 1v11L3.500 8.500H1zM9 4.500q2 2 0 4M11.500 2.500q3.500 4 0 8" />
          <path d="M14 1q4.500 5.500 0 11" stroke="#7c8688" />
        </svg>
      </TrayIcon>
      <TrayIcon $width={33} aria-label="触摸键盘">
        <svg width="23" height="13" fill="none" stroke="#fff">
          <rect x=".5" y=".5" width="22" height="12" />
          <path d="M3 3.500h17M3 6.500h17" strokeDasharray="1 1" />
          <path d="M5 9.500h13" />
        </svg>
      </TrayIcon>
      <TrayIcon $width={26}>中</TrayIcon>
      <TrayIcon $width={30} aria-label="搜狗输入法">
        <SogouLogo size={16} />
      </TrayIcon>
      <Clock>
        11:08
        <br />
        2018/9/8
      </Clock>
      <Notices aria-label="操作中心">
        <svg width="17" height="17" fill="#fff">
          <path d="M0 0h16v12H6l-3 4v-4H0z" />
          <path d="M3 3.500h10M3 6h10M3 8.500h7" stroke="#0b1a1c" />
        </svg>
        <Count>3</Count>
      </Notices>
    </Tray>
  </TaskBar>
);

export default function App() {
  return (
    <Page>
      <GlobalStyle />
      <TitleBar>
        <AppLogo />
        <WindowTitle>
          广联达BIM钢筋算量软件 GGJ2013 -
          [C:\Users\Administrator.PC-20141127NRHM\Desktop\白龙村-2018-02-03-20-08-17(2666版).GGJ12]
        </WindowTitle>
        <WindowButton aria-label="最小化">
          <svg width="11" height="11" stroke="#999"><path d="M0 5.500h11" /></svg>
        </WindowButton>
        <WindowButton aria-label="还原">
          <svg width="11" height="11" fill="none" stroke="#999">
            <path d="M.5 2.500h8v8h-8zM2.500 2.500v-2h8v8h-2" />
          </svg>
        </WindowButton>
        <WindowButton aria-label="关闭">
          <svg width="11" height="11" stroke="#999"><path d="M.5.5l10 10M10.500.5l-10 10" /></svg>
        </WindowButton>
      </TitleBar>
      <Score>73</Score>

      <BarRow>
        <MenuBar>
          {menus.map((m) => (
            <Tool key={m}>{m}</Tool>
          ))}
          <ToolButton>
            <Icon name="change" />
            新建变更
            <Caret />
          </ToolButton>
          <Tool icon="mascot">广小二</Tool>
        </MenuBar>
        <Bar $fixed={187}>
          <Notice href="#tips">点识别楼层表之后提示..</Notice>
        </Bar>
        <Bar $grow $gap={10}>
          <Tool icon="account" caret>13907298339</Tool>
          <Tool>造价豆:0</Tool>
          <Icon name="bell" />
          <More />
        </Bar>
      </BarRow>

      <BarRow>
        <Bar $fixed={151} $gap={8}>
          <Tool icon="file" label="新建" />
          <Tool icon="open" label="打开" caret />
          <Tool icon="save" label="保存" />
          <Separator />
          <Tool icon="undo" label="撤销" caret />
          <More />
        </Bar>
        <Bar $fixed={548}>
          <Tool icon="bucket">绘图</Tool>
          <ToolButton>
            <Sigma>Σ</Sigma>
            汇总计算
          </ToolButton>
          <Tool icon="cloud">云检查</Tool>
          <Tool icon="slab" disabled>平齐板顶</Tool>
          <Tool icon="find" disabled>查找图元</Tool>
          <Tool icon="glasses" disabled>查看钢筋量</Tool>
          <Tool icon="grid" label="钢筋表" disabled />
        </Bar>
        <Bar $grow $left={88}>
          <Tool disabled caret>俯视</Tool>
          <Tool icon="planet" disabled>动态观察</Tool>
          <Tool icon="cube" disabled>局部三维</Tool>
          <Separator />
          <Tool icon="full" disabled>全屏</Tool>
          <Tool icon="zoom" disabled caret>缩放</Tool>
          <Tool icon="hand" disabled caret>平移</Tool>
          <Tool icon="turn" disabled caret>屏幕旋转</Tool>
          <Separator />
          <Tool icon="floors" disabled>选择楼层</Tool>
          <More />
        </Bar>
      </BarRow>
      <Ime />

      <Body>
        <ModuleDock />
        <Work>
          <Bar $low>
            <Tool icon="add" caret>新建</Tool>
            <Tool icon="remove">删除</Tool>
            <Tool icon="copy">复制</Tool>
            <Tool icon="rename">重命名</Tool>
            <Separator $tight />
            <FloorPicker>
              楼层
              <SelectBox $width={60}>
                <select defaultValue="第2层">
                  <option>第2层</option>
                </select>
                <Caret />
              </SelectBox>
            </FloorPicker>
            <Separator $tight />
            <Tool icon="sort" caret>排序</Tool>
            <Tool icon="funnel" caret>过滤</Tool>
            <Separator $tight />
            <Tool icon="copyFloor">从其他楼层复制构件</Tool>
            <Tool icon="copyFloor">复制构件到其他楼层</Tool>
            <Separator $tight />
            <Tool caret>查找</Tool>
            <Separator $tight />
            <Tool icon="up">上移</Tool>
            <Tool icon="down" disabled>下移</Tool>
          </Bar>
          <Panels>
            <ComponentList />
            <Properties>
              <Tab>属性编辑</Tab>
              <TabPage>
                <Sheet>
                  <PropertyTable />
                  <ScrollBar>
                    <button aria-label="向上滚动"><Chevron up /></button>
                    <button aria-label="向下滚动"><Chevron open /></button>
                  </ScrollBar>
                </Sheet>
              </TabPage>
            </Properties>
            <SectionEditor />
          </Panels>
        </Work>
      </Body>

      <StatusBar>
        <StatusCell $width={148} />
        <StatusCell $width={78}>层高:4.5m</StatusCell>
        <StatusCell $width={98}>底标高:4.45m</StatusCell>
        <StatusCell $width={48}>0</StatusCell>
        <StatusCell />
        <StatusCell $width={70}>575.7 FPS</StatusCell>
      </StatusBar>
      <WindowsTaskBar />
    </Page>
  );
}
